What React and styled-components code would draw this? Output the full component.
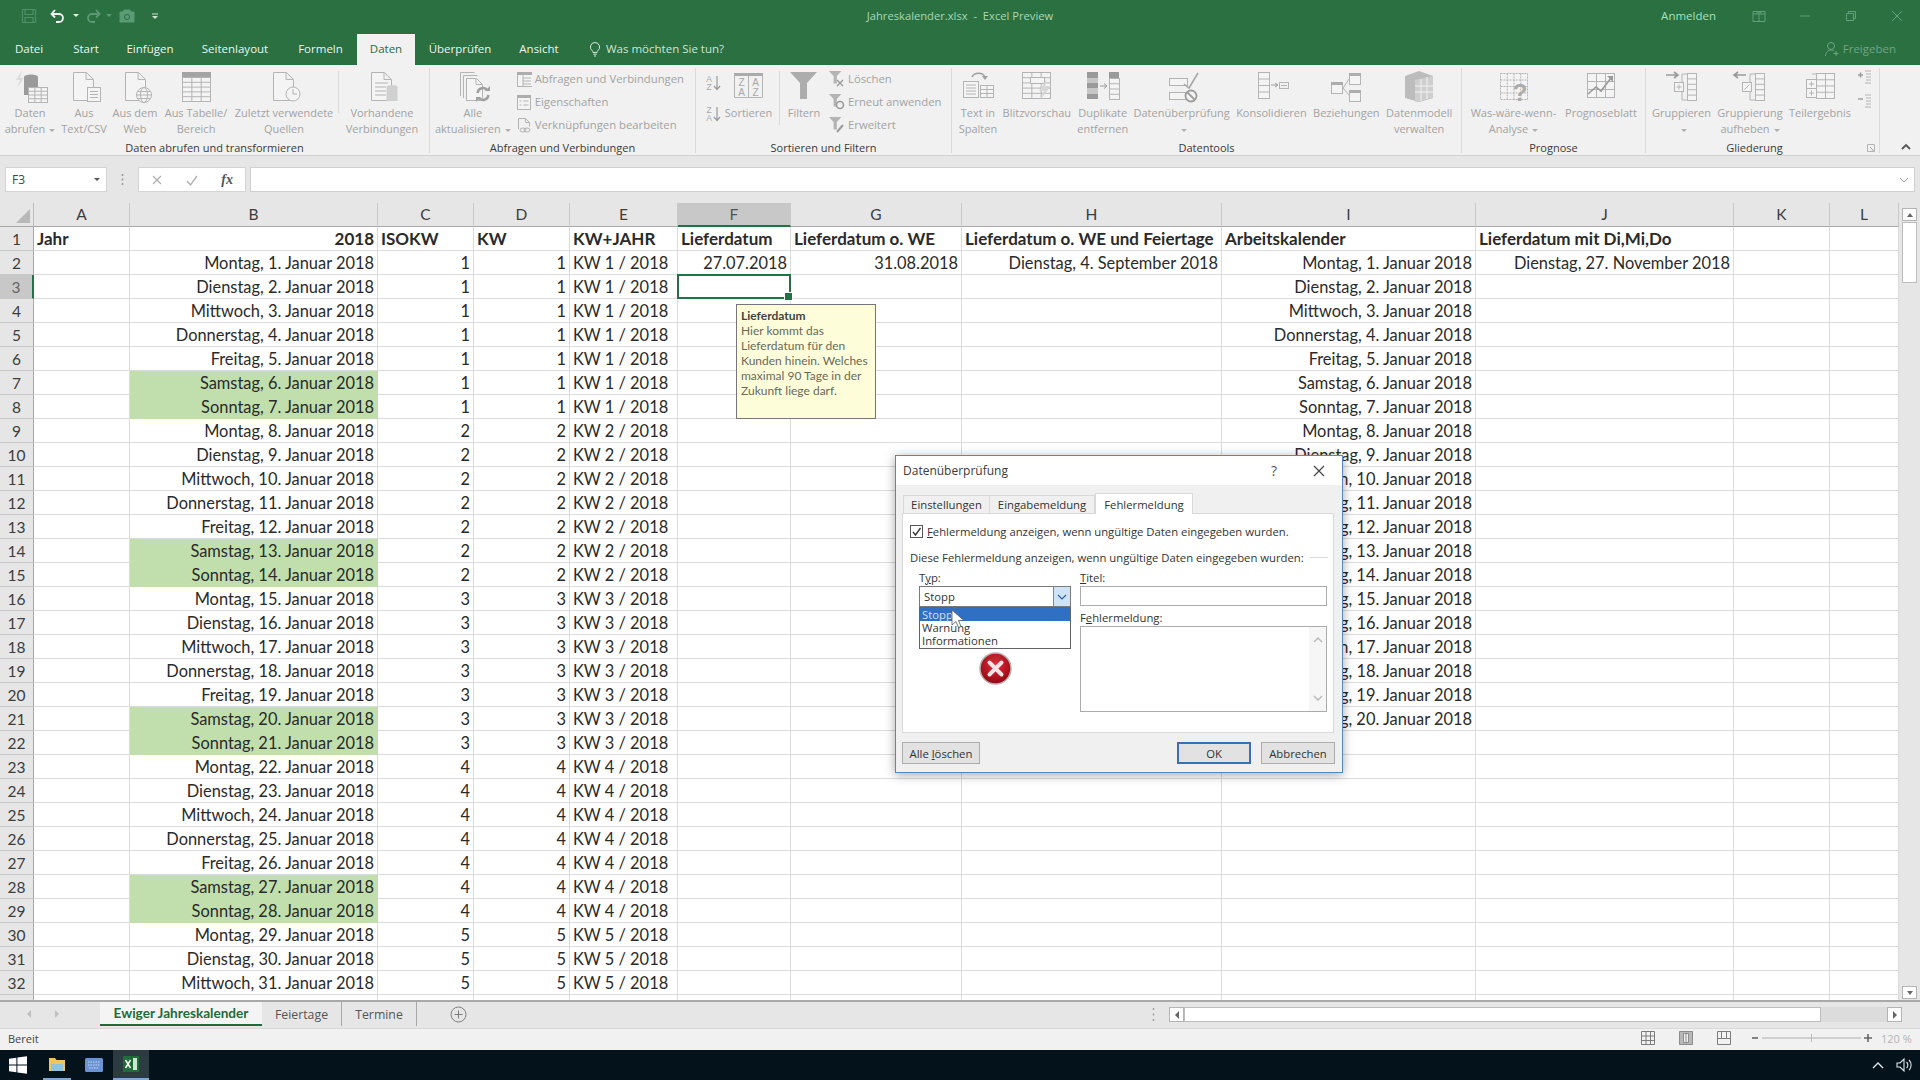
import React from 'react';
import styled, {createGlobalStyle} from 'styled-components';

const Global = createGlobalStyle`
    html, body {
        margin: 0;
        padding: 0;
        background: #e6e6e6;
        overflow: hidden;
    }
    * {
        box-sizing: border-box;
    }
`;

const GREEN = '#2a7041';
const UI = '"Open Sans", "Liberation Sans", sans-serif';
const SHEET = 'Lato, "Liberation Sans", sans-serif';

const Page = styled.div`
    position: relative;
    width: 1920px;
    height: 1080px;
    display: flex;
    flex-direction: column;
    font-family: ${UI};
    overflow: hidden;
`;

/* title bar */
const TitleBar = styled.div`
    height: 31px;
    background: ${GREEN};
    display: grid;
    grid-template-columns: 1fr auto 1fr;
    align-items: center;
`;
const Qat = styled.div`
    display: flex;
    align-items: center;
    padding-left: 18px;
`;
const QatItem = styled.div`
    display: flex;
    justify-content: center;
    width: ${p => p.$w}px;
    margin-left: ${p => p.$ml || 0}px;
`;
const DocTitle = styled.div`
    color: #a8d8b8;
    font-size: 11.2px;
    white-space: pre;
`;
const WindowControls = styled.div`
    display: flex;
    justify-content: flex-end;
    align-items: center;
`;
const Signin = styled.div`
    color: #a5e0bb;
    font-size: 11.5px;
    margin-right: 20px;
`;
const WinButton = styled.div`
    width: 46px;
    height: 31px;
    display: flex;
    align-items: center;
    justify-content: center;
`;

/* tabs */
const TabRow = styled.div`
    height: 34px;
    background: ${GREEN};
    display: flex;
    align-items: flex-end;
`;
const Tab = styled.div`
    width: ${p => p.$w}px;
    height: 31px;
    padding-bottom: 2px;
    display: flex;
    align-items: center;
    justify-content: center;
    font-size: 11.5px;
    color: ${p => p.$active ? '#2a6b40' : '#ecf5ef'};
    background: ${p => p.$active ? '#f1f1f1' : 'transparent'};
`;
const TellMe = styled.div`
    display: flex;
    align-items: center;
    gap: 3px;
    height: 31px;
    padding-bottom: 2px;
    margin-left: 14px;
    font-size: 11.5px;
    color: #cfe5d6;
`;
const Share = styled.div`
    margin-left: auto;
    height: 31px;
    padding-right: 24px;
    padding-bottom: 2px;
    display: flex;
    align-items: center;
    gap: 3px;
    font-size: 11.5px;
    color: #6fa585;
`;

/* ribbon */
const Ribbon = styled.div`
    height: 91px;
    background: #f1f1f1;
    border-bottom: 1px solid #d2d2d2;
    display: flex;
    align-items: flex-start;
    padding-top: 3px;
`;
const Group = styled.div`
    width: ${p => p.$w}px;
    height: 85px;
    border-right: 1px solid #dadada;
    display: flex;
    flex-direction: column;
`;
const GroupBody = styled.div`
    height: 72px;
    display: flex;
    align-items: flex-start;
`;
const GroupFoot = styled.div`
    height: 13px;
    display: flex;
`;
const GroupLabel = styled.div`
    flex: 1;
    text-align: center;
    font-size: 11px;
    line-height: 16px;
    color: #3a3a3a;
`;
const Launcher = styled.div`
    width: 16px;
    padding: 3px 0 0 3px;
`;
const BigButton = styled.div`
    width: ${p => p.$w}px;
    padding-top: 1px;
    display: flex;
    flex-direction: column;
    align-items: center;
`;
const BtnLabel = styled.div`
    font-size: 11px;
    line-height: 16px;
    color: #a3a3a3;
    white-space: nowrap;
    text-align: center;
`;
const Caret = styled.span`
    display: inline-block;
    width: 0;
    height: 0;
    margin-left: 4px;
    vertical-align: middle;
    border-left: 3px solid transparent;
    border-right: 3px solid transparent;
    border-top: 3px solid ${p => p.$c || '#b0b0b0'};
`;
const ThinRule = styled.div`
    width: 1px;
    height: ${p => p.$h}px;
    margin-top: 3px;
    margin-left: ${p => p.$ml || 0}px;
    background: #dadada;
`;
const SmallList = styled.div`
    display: flex;
    flex-direction: column;
    width: ${p => p.$w}px;
    margin-top: -1px;
    padding-left: ${p => p.$pl}px;
`;
const SmallRow = styled.div`
    height: 23px;
    display: flex;
    align-items: center;
    gap: 3px;
    font-size: 11.3px;
    color: #a3a3a3;
    white-space: nowrap;
`;
const SortColumn = styled.div`
    width: 34px;
    padding-top: 6px;
    display: flex;
    flex-direction: column;
    align-items: center;
    gap: 13px;
`;
const OutlineColumn = styled.div`
    width: 16px;
    padding-top: 1px;
    display: flex;
    flex-direction: column;
    align-items: center;
    gap: 8px;
`;
const Collapse = styled.div`
    flex: 1;
    height: 85px;
    display: flex;
    align-items: flex-end;
    justify-content: center;
    padding-left: 12px;
`;

/* formula bar */
const FormulaBar = styled.div`
    height: 47px;
    background: #e6e6e6;
    display: flex;
    align-items: flex-start;
    padding: 11px 5px 0 5px;
`;
const NameBox = styled.div`
    width: 102px;
    height: 25px;
    background: #fff;
    border: 1px solid #d4d4d4;
    display: flex;
    align-items: center;
    justify-content: space-between;
    padding: 0 6px;
    font-size: 12px;
    color: #444;
`;
const Grip = styled.div`
    width: 31px;
    display: flex;
    justify-content: center;
    padding-top: 7px;
`;
const FormulaButtons = styled.div`
    width: 108px;
    height: 25px;
    background: #fff;
    border: 1px solid #d4d4d4;
    display: flex;
    align-items: center;
    justify-content: space-between;
    padding: 0 12px;
`;
const Fx = styled.span`
    font-family: "Liberation Serif", serif;
    font-style: italic;
    font-weight: bold;
    font-size: 14px;
    color: #555;
`;
const FormulaInput = styled.div`
    flex: 1;
    height: 25px;
    margin-left: 4px;
    background: #fff;
    border: 1px solid #d0d0d0;
    display: flex;
    align-items: center;
    justify-content: flex-end;
    padding-right: 5px;
`;

/* sheet */
const SheetArea = styled.div`
    height: 797px;
    display: flex;
    background: #e6e6e6;
`;
const SheetGrid = styled.div`
    width: 1899px;
    height: 797px;
    overflow: hidden;
    display: grid;
    grid-template-columns: 34px 96px 248px 96px 96px 108px 113px 171px 260px 254px 258px 96px 69px;
    grid-auto-rows: 24px;
    font-family: ${SHEET};
`;
const Corner = styled.div`
    background: #e6e6e6;
    border-right: 1px solid #bdbdbd;
    border-bottom: 1px solid #a8a8a8;
    display: flex;
    align-items: flex-end;
    justify-content: flex-end;
    padding: 0 3px 3px 0;
`;
const Triangle = styled.div`
    width: 0;
    height: 0;
    border-left: 14px solid transparent;
    border-bottom: 14px solid #b8b8b8;
`;
const ColHead = styled.div`
    background: ${p => p.$active ? '#c8c8c8' : '#e6e6e6'};
    border-right: 1px solid #c8c8c8;
    border-bottom: ${p => p.$active ? '2px solid #217346' : '1px solid #a8a8a8'};
    text-align: center;
    font-size: 15.5px;
    line-height: 23px;
    color: ${p => p.$active ? '#555' : '#3d3d3d'};
`;
const RowHead = styled.div`
    background: ${p => p.$active ? '#c8c8c8' : '#e6e6e6'};
    border-right: ${p => p.$active ? '2px solid #217346' : '1px solid #a8a8a8'};
    border-bottom: 1px solid #c8c8c8;
    text-align: center;
    font-size: 15.5px;
    line-height: 24px;
    color: ${p => p.$active ? '#666' : '#3d3d3d'};
`;
const Cell = styled.div`
    position: relative;
    background: ${p => p.$green ? '#c1dfad' : '#fff'};
    border-right: 1px solid ${p => p.$green ? '#c1dfad' : '#dcdcdc'};
    border-bottom: 1px solid ${p => p.$green ? '#c1dfad' : '#dcdcdc'};
    padding: 0 3px;
    font-size: ${p => p.$bold ? 17 : 16.4}px;
    line-height: 24px;
    font-weight: ${p => p.$bold ? 700 : 400};
    text-align: ${p => p.$right ? 'right' : 'left'};
    color: #2a2a2a;
    white-space: nowrap;
`;
const Selection = styled.div`
    position: absolute;
    inset: -1px -1px -1px -1px;
    z-index: 2;
    border: 2px solid #217346;
    &::after {
        content: '';
        position: absolute;
        right: -4px;
        bottom: -4px;
        width: 7px;
        height: 7px;
        background: #217346;
        border: 1px solid #fff;
    }
`;
const VScroll = styled.div`
    width: 21px;
    height: 797px;
    padding: 5px 3px 1px 3px;
    display: flex;
    flex-direction: column;
    background: #e6e6e6;
`;
const ScrollBtn = styled.div`
    height: ${p => p.$h || 13}px;
    background: #fff;
    border: 1px solid #b4b4b4;
    display: flex;
    align-items: center;
    justify-content: center;
`;
const VThumb = styled.div`
    height: 61px;
    margin-top: 1px;
    background: #fff;
    border: 1px solid #bdbdbd;
`;
const Spacer = styled.div`
    flex: 1;
`;

/* sheet tabs */
const SheetBar = styled.div`
    height: 28px;
    background: #e6e6e6;
    border-top: 2px solid #a9a9a9;
    display: flex;
    align-items: flex-start;
`;
const NavArrows = styled.div`
    width: 100px;
    height: 24px;
    display: flex;
    align-items: center;
    gap: 22px;
    padding-left: 26px;
`;
const SheetTab = styled.div`
    width: ${p => p.$w}px;
    height: 24px;
    display: flex;
    align-items: center;
    justify-content: center;
    font-size: ${p => p.$active ? 13.6 : 12.3}px;
    font-weight: ${p => p.$active ? 700 : 400};
    color: ${p => p.$active ? '#1f6b3a' : '#555'};
    background: ${p => p.$active ? '#f4f4f4' : 'transparent'};
    border-bottom: ${p => p.$active ? '2px solid #1f6b3a' : 'none'};
    border-right: ${p => p.$sep ? '1px solid #a8a8a8' : 'none'};
    font-family: ${p => p.$active ? SHEET : UI};
`;
const AddSheet = styled.div`
    margin-left: 33px;
    height: 24px;
    display: flex;
    align-items: center;
`;
const HScrollWrap = styled.div`
    margin-left: auto;
    padding: 5px 18px 0 0;
    display: flex;
    align-items: center;
`;
const HGrip = styled.div`
    margin-right: 14px;
    display: flex;
`;
const HBtn = styled.div`
    width: 15px;
    height: 15px;
    background: #fff;
    border: 1px solid #b4b4b4;
    display: flex;
    align-items: center;
    justify-content: center;
`;
const HThumb = styled.div`
    width: 637px;
    height: 15px;
    background: #fff;
    border: 1px solid #bdbdbd;
`;
const HTrack = styled.div`
    width: 66px;
    height: 15px;
    background: #dcdcdc;
`;

/* status bar */
const StatusBar = styled.div`
    height: 22px;
    background: #f1f1f1;
    border-top: 1px solid #dadada;
    display: flex;
    align-items: center;
    padding: 0 0 3px 8px;
    font-size: 11px;
    color: #444;
`;
const StatusRight = styled.div`
    margin-left: auto;
    display: flex;
    align-items: center;
`;
const ViewBtn = styled.div`
    width: 38px;
    display: flex;
    justify-content: center;
`;
const ZoomMinus = styled.div`
    margin-left: 8px;
    display: flex;
`;
const ZoomSlider = styled.div`
    position: relative;
    width: 99px;
    height: 2px;
    margin: 0 3px;
    background: #cfcfcf;
    &::after {
        content: '';
        position: absolute;
        left: 49px;
        top: -3px;
        width: 1px;
        height: 8px;
        background: #bdbdbd;
    }
`;
const ZoomText = styled.div`
    width: 48px;
    padding-left: 9px;
    color: #b4b4b4;
    font-size: 11px;
    white-space: nowrap;
`;

/* taskbar */
const Taskbar = styled.div`
    height: 30px;
    background: #04121b;
    display: flex;
    align-items: stretch;
`;
const TaskSlot = styled.div`
    width: ${p => p.$w}px;
    margin-left: ${p => p.$ml || 0}px;
    display: flex;
    align-items: center;
    justify-content: center;
    background: ${p => p.$bg || 'transparent'};
    border-bottom: ${p => p.$open ? '2px solid #7fa9cf' : 'none'};
`;
const Tray = styled.div`
    margin-left: auto;
    display: flex;
    align-items: center;
    gap: 10px;
    padding-right: 7px;
`;

/* data validation dialog */
const Dialog = styled.div`
    position: absolute;
    left: 895px;
    top: 455px;
    width: 448px;
    height: 318px;
    background: #f0f0f0;
    border: 1px solid #4f8ac6;
    box-shadow: 0 2px 10px rgba(0, 0, 0, 0.35);
    font-size: 11.3px;
    color: #333;
`;
const DlgHead = styled.div`
    height: 29px;
    background: #fff;
    display: flex;
    align-items: center;
    padding-left: 7px;
    font-size: 12px;
    color: #3a3a3a;
`;
const DlgHelp = styled.div`
    margin-left: auto;
    margin-right: 36px;
    font-size: 14px;
    color: #555;
`;
const DlgClose = styled.div`
    margin-right: 17px;
    display: flex;
`;
const DlgTabs = styled.div`
    height: 28px;
    padding-left: 7px;
    display: flex;
    align-items: flex-end;
`;
const DlgTab = styled.div`
    width: ${p => p.$w}px;
    height: ${p => p.$active ? 21 : 18}px;
    display: flex;
    align-items: center;
    justify-content: center;
    background: ${p => p.$active ? '#fff' : '#f0f0f0'};
    border: 1px solid #d9d9d9;
    border-bottom: none;
    border-left: ${p => p.$first || p.$active ? '1px solid #d9d9d9' : 'none'};
    margin-bottom: ${p => p.$active ? -1 : 0}px;
    position: relative;
    z-index: ${p => p.$active ? 1 : 0};
`;
const DlgPanel = styled.div`
    height: 220px;
    margin: 0 8px 0 6px;
    background: #fff;
    border: 1px solid #d9d9d9;
    padding: 10px 5px 0 7px;
`;
const CheckRow = styled.div`
    display: flex;
    align-items: center;
    gap: 4px;
    height: 14px;
`;
const CheckBox = styled.div`
    width: 13px;
    height: 13px;
    border: 1px solid #555;
    display: flex;
    align-items: center;
    justify-content: center;
`;
const Legend = styled.div`
    margin-top: 12px;
    display: flex;
    align-items: center;
    gap: 6px;
    white-space: nowrap;
    &::after {
        content: '';
        flex: 1;
        height: 1px;
        background: #dcdcdc;
    }
`;
const Columns = styled.div`
    margin-top: 6px;
    padding-left: 9px;
    display: flex;
    gap: 9px;
`;
const Col = styled.div`
    width: ${p => p.$w}px;
    display: flex;
    flex-direction: column;
`;
const FieldLabel = styled.div`
    height: 15px;
    line-height: 14px;
    margin-top: ${p => p.$mt || 0}px;
`;
const SelectWrap = styled.div`
    position: relative;
`;
const SelectBox = styled.div`
    height: 21px;
    border: 1px solid #7a7a7a;
    background: #fff;
    display: flex;
    align-items: center;
    padding-left: 4px;
    justify-content: space-between;
`;
const SelectArrow = styled.div`
    width: 17px;
    height: 19px;
    background: #cfe3f7;
    border-left: 1px solid #5a90c8;
    display: flex;
    align-items: center;
    justify-content: center;
`;
const OptionList = styled.div`
    position: absolute;
    left: 0;
    right: 0;
    top: 21px;
    height: 42px;
    background: #fff;
    border: 1px solid #646464;
    z-index: 2;
`;
const Option = styled.div`
    height: 13px;
    line-height: 13px;
    padding-left: 2px;
    background: ${p => p.$active ? '#2f6fc4' : 'transparent'};
    color: ${p => p.$active ? '#cfe0f5' : '#333'};
`;
const CursorMark = styled.svg`
    position: absolute;
    left: 32px;
    top: 23px;
    z-index: 3;
`;
const StopBadge = styled.div`
    margin-top: 45px;
    display: flex;
    justify-content: center;
`;
const TextField = styled.div`
    height: 20px;
    background: #fff;
    border: 1px solid #ababab;
`;
const TextArea = styled.div`
    height: 86px;
    background: #fff;
    border: 1px solid #ababab;
    display: flex;
    justify-content: flex-end;
`;
const AreaScroll = styled.div`
    width: 17px;
    background: #f6f6f6;
    display: flex;
    flex-direction: column;
    justify-content: space-between;
    align-items: center;
    padding: 8px 0;
`;
const DlgFoot = styled.div`
    height: 41px;
    padding: 9px 7px 0 6px;
    display: flex;
    align-items: flex-start;
`;
const DlgButton = styled.div`
    width: ${p => p.$w}px;
    height: 22px;
    margin-left: ${p => p.$ml || 0}px;
    display: flex;
    align-items: center;
    justify-content: center;
    background: #e2e2e2;
    border: ${p => p.$primary ? '2px solid #3a6fb0' : '1px solid #adadad'};
`;

/* cell tooltip */
const Note = styled.div`
    position: absolute;
    left: 736px;
    top: 304px;
    width: 140px;
    height: 115px;
    background: #fdfdd9;
    border: 1px solid #767676;
    padding: 4px 4px;
    font-family: ${SHEET};
    font-size: 12px;
    line-height: 15px;
    color: #6a6a5a;
    z-index: 1;
`;
const NoteTitle = styled.div`
    font-weight: 700;
    color: #444;
    line-height: 14px;
`;

/* icons */
const Glyph = styled.svg`
    display: block;
    flex: none;
    fill: none;
    stroke: ${p => p.$c || '#b4b4b4'};
    stroke-width: 1;
`;
const Ico = ({s = 36, h, c, children}) => (
    <Glyph width={s} height={h || s} viewBox={`0 0 ${s} ${h || s}`} $c={c}>{children}</Glyph>
);
const D = '#b4b4b4';
const Doc = ({x = 7, w = 20}) => (
    <path d={`M${x + .5} 3.5h${w - 7}l7 7v21h-${w}zM${x + w - 7} 3.5v7h7`} fill="#f4f4f4" />
);
const tableLines = (x, y, w, h, cols, rows) => {
    const out = [];
    for (let i = 1; i < cols; i++) out.push(<path key={'c' + i} d={`M${x + i * w / cols} ${y}v${h}`} />);
    for (let i = 1; i < rows; i++) out.push(<path key={'r' + i} d={`M${x} ${y + i * h / rows}h${w}`} />);
    return out;
};
const Sheetlet = ({x, y, w, h, cols, rows, fill = '#f4f4f4'}) => (
    <g>
        <rect x={x + .5} y={y + .5} width={w} height={h} fill={fill} />
        {tableLines(x + .5, y + .5, w, h, cols, rows)}
    </g>
);
const Funnel = ({x = 0, y = 0, k = 1, fill = D}) => (
    <path d={`M${x} ${y}h${27 * k}l${-10 * k} ${11 * k}v${16 * k}h${-7 * k}v${-16 * k}z`} fill={fill} stroke="none" />
);

const icons = {
    getData: (
        <Ico>
            <path d="M10 1l-6 10h4l-3 8 7-10H8z" fill="#dcdcdc" stroke="none" />
            <ellipse cx="19" cy="8" rx="7" ry="2.5" fill="#9a9a9a" stroke="none" />
            <rect x="12" y="8" width="14" height="18" fill="#9a9a9a" stroke="none" />
            <Sheetlet x={16} y={18} w={19} h={15} cols={3} rows={4} fill="#f4f4f4" />
        </Ico>
    ),
    textCsv: (
        <Ico>
            <Doc />
            <rect x="21.5" y="18.5" width="13" height="14" fill="#f4f4f4" />
            <path d="M24 22.5h8M24 25.5h8M24 28.5h8" />
        </Ico>
    ),
    web: (
        <Ico>
            <Doc x={8} />
            <circle cx="27" cy="26" r="7.5" fill="#f4f4f4" />
            <ellipse cx="27" cy="26" rx="3.5" ry="7.5" />
            <path d="M19.5 26h15M20.5 22.5h13M20.5 29.5h13" />
        </Ico>
    ),
    table: (
        <Ico>
            <rect x="4" y="3" width="29" height="5" fill="#a4a4a4" stroke="none" />
            <Sheetlet x={4} y={8} w={28} h={24} cols={3} rows={5} />
        </Ico>
    ),
    recent: (
        <Ico>
            <Doc />
            <circle cx="27" cy="25" r="7" fill="#f4f4f4" />
            <path d="M27 20v5h4" />
        </Ico>
    ),
    existing: (
        <Ico>
            <Doc />
            <path d="M11 14h13M11 18h11M11 22h11M11 26h11" />
            <ellipse cx="28" cy="18" rx="5.5" ry="2" fill="#d0d0d0" stroke="none" />
            <rect x="22.5" y="18" width="11" height="14" fill="#d0d0d0" stroke="none" />
        </Ico>
    ),
    refreshAll: (
        <Ico>
            <path d="M5.5 27V3.5h14M8.5 29V6.5h14" />
            <path d="M11.5 31.5v-22h10l6 6v16z" fill="#f4f4f4" />
            <path d="M21 9.5v6h6" />
            <path d="M22.5 24a5.5 5.5 0 0 1 10-2.5M33.5 26a5.5 5.5 0 0 1-10 2.5" stroke="#a0a0a0" strokeWidth="2.4" />
            <path d="M30 22h5v-5zM26 28h-5v5z" fill="#a0a0a0" stroke="none" />
        </Ico>
    ),
    sortBig: (
        <Ico>
            <rect x="3" y="4" width="29" height="3" fill="#ababab" stroke="none" />
            <path d="M3.5 7v21.5h28V7M17.5 7v21.5" />
            <text x="10.5" y="17" fontSize="10" fontFamily="Liberation Sans" textAnchor="middle" fill="#a8a8a8" stroke="none">Z</text>
            <text x="24.5" y="17" fontSize="10" fontFamily="Liberation Sans" textAnchor="middle" fill="#a8a8a8" stroke="none">A</text>
            <text x="10.5" y="27" fontSize="10" fontFamily="Liberation Sans" textAnchor="middle" fill="#a8a8a8" stroke="none">A</text>
            <text x="24.5" y="27" fontSize="10" fontFamily="Liberation Sans" textAnchor="middle" fill="#a8a8a8" stroke="none">Z</text>
        </Ico>
    ),
    filter: (
        <Ico>
            <g transform="translate(4 3)"><Funnel fill="#adadad" /></g>
        </Ico>
    ),
    textCols: (
        <Ico>
            <path d="M12 8a7 6 0 0 1 13 0" stroke="#a0a0a0" strokeWidth="1.6" />
            <path d="M22 7l3 4 3-4z" fill="#a0a0a0" stroke="none" />
            <rect x="3.5" y="12.5" width="15" height="16" fill="#f4f4f4" />
            <path d="M6 16h10M6 19h10M6 22h10M6 25h10" />
            <Sheetlet x={20} y={16} w={13} h={12} cols={2} rows={3} />
        </Ico>
    ),
    flash: (
        <Ico>
            <Sheetlet x={3} y={3} w={28} h={26} cols={3} rows={5} />
            <rect x="11.5" y="8.5" width="14" height="6" fill="#f4f4f4" />
            <path d="M28 10l-8 12h5l-4 9 11-14h-6z" fill="#d6d6d6" stroke="none" />
        </Ico>
    ),
    dupes: (
        <Ico>
            <rect x="2" y="3" width="11" height="27" fill="#c6c6c6" stroke="none" />
            <rect x="2" y="3" width="11" height="6" fill="#9a9a9a" stroke="none" />
            <rect x="2" y="14" width="11" height="5" fill="#9a9a9a" stroke="none" />
            <rect x="2" y="25" width="11" height="5" fill="#9a9a9a" stroke="none" />
            <path d="M15 17h6M19 14.5l3 2.5-3 2.5" stroke="#9a9a9a" />
            <rect x="24" y="3" width="10" height="6" fill="#9a9a9a" stroke="none" />
            <Sheetlet x={24} y={9} w={10} h={21} cols={1} rows={4} />
        </Ico>
    ),
    validate: (
        <Ico>
            <rect x="5.5" y="9.5" width="18" height="7" fill="#f4f4f4" />
            <rect x="5.5" y="23.5" width="18" height="7" fill="#f4f4f4" />
            <path d="M20 15l5 4 9-15" stroke="#a8a8a8" strokeWidth="1.6" />
            <circle cx="27" cy="27" r="5.5" fill="#f4f4f4" stroke="#9c9c9c" strokeWidth="1.8" />
            <path d="M23 23l8 8" stroke="#9c9c9c" strokeWidth="1.8" />
        </Ico>
    ),
    consolidate: (
        <Ico>
            <Sheetlet x={5} y={3} w={11} h={26} cols={1} rows={4} />
            <path d="M18 16h6M22 14l3 2-3 2" stroke="#9a9a9a" />
            <rect x="26.5" y="13.5" width="9" height="6" />
            <path d="M28 16.5h6" />
        </Ico>
    ),
    relations: (
        <Ico>
            <rect x="3.5" y="13.5" width="11" height="11" fill="#f4f4f4" />
            <rect x="3" y="13" width="12" height="3" fill="#adadad" stroke="none" />
            <rect x="21.5" y="4.5" width="11" height="11" fill="#f4f4f4" />
            <rect x="21" y="4" width="12" height="3" fill="#adadad" stroke="none" />
            <rect x="21.5" y="21.5" width="11" height="11" fill="#f4f4f4" />
            <rect x="21" y="21" width="12" height="3" fill="#adadad" stroke="none" />
            <path d="M15 19l6-9M15 19l6 7" />
        </Ico>
    ),
    model: (
        <Ico>
            <path d="M4 7l14-5 14 5v22l-14 4-14-4z" fill="#bcbcbc" stroke="none" />
            <path d="M14 11l18-4v22l-18 4z" fill="#cfcfcf" stroke="none" />
            <path d="M14 17h18M14 23h18M20 10v22M26 8v22" stroke="#f1f1f1" />
        </Ico>
    ),
    whatIf: (
        <Ico>
            <g strokeDasharray="2 1"><Sheetlet x={4} y={4} w={27} h={26} cols={4} rows={4} /></g>
            <text x="24" y="32" fontSize="24" fontWeight="700" fontFamily="Liberation Sans" textAnchor="middle" fill="#ababab" stroke="none">?</text>
        </Ico>
    ),
    forecast: (
        <Ico>
            <Sheetlet x={4} y={4} w={27} h={24} cols={3} rows={3} />
            <path d="M5 25l8-7 5 4 10-13" stroke="#9a9a9a" strokeWidth="1.6" />
            <path d="M24 7h6v6z" fill="#9a9a9a" stroke="none" />
        </Ico>
    ),
    group: (
        <Ico>
            <path d="M2 6h11M10 3l4 3-4 3" stroke="#9a9a9a" strokeWidth="1.6" />
            <path d="M23 5h-5v26h5" />
            <Sheetlet x={23} y={4} w={9} h={27} cols={1} rows={5} />
            <rect x="10.5" y="13.5" width="9" height="9" fill="#f4f4f4" />
            <path d="M12.5 18h5M15 15.5v5" />
        </Ico>
    ),
    ungroup: (
        <Ico>
            <path d="M14 6H3M6 3L2 6l4 3" stroke="#9a9a9a" strokeWidth="1.6" />
            <path d="M23 5h-5v26h5" />
            <Sheetlet x={23} y={4} w={9} h={27} cols={1} rows={5} />
            <rect x="10.5" y="13.5" width="9" height="9" fill="#f4f4f4" />
            <path d="M12.5 20.5l5-5" />
        </Ico>
    ),
    subtotal: (
        <Ico>
            <path d="M15 5h-5" />
            <Sheetlet x={14} y={4} w={18} h={25} cols={2} rows={4} />
            <rect x="4.5" y="10.5" width="10" height="9" fill="#f4f4f4" />
            <rect x="4.5" y="19.5" width="10" height="9" fill="#f4f4f4" />
            <path d="M7 15h5M9.5 12.5v5M7 24h5M9.5 21.5v5" />
        </Ico>
    ),
    panel: (
        <Ico s={16}>
            <rect x="1.5" y="1.5" width="15" height="14" fill="#f4f4f4" />
            <rect x="1" y="1" width="15" height="3" fill="#adadad" stroke="none" />
            <path d="M7 4v11M7 7h8M7 10h8M7 13h8" />
        </Ico>
    ),
    props: (
        <Ico s={16}>
            <rect x="1.5" y="1.5" width="13" height="14" fill="#f4f4f4" />
            <rect x="1" y="1" width="14" height="3" fill="#adadad" stroke="none" />
            <path d="M3.5 7h2M7.5 7h5M3.5 11h2M7.5 11h5" />
        </Ico>
    ),
    links: (
        <Ico s={16}>
            <path d="M2.5 12V1.5h7l4 4v4M9.5 1.5v4h4" />
            <ellipse cx="7" cy="13" rx="3" ry="2" />
            <ellipse cx="11" cy="13" rx="3" ry="2" />
        </Ico>
    ),
    clear: (
        <Ico s={16}>
            <Funnel k={.46} />
            <path d="M8 9l6 6M14 9l-6 6" stroke="#9a9a9a" strokeWidth="1.4" />
        </Ico>
    ),
    reapply: (
        <Ico s={16}>
            <Funnel k={.46} />
            <circle cx="11" cy="11" r="3.5" stroke="#9a9a9a" strokeWidth="1.6" />
        </Ico>
    ),
    advanced: (
        <Ico s={16}>
            <Funnel k={.46} />
            <path d="M8 15l6-7" stroke="#9a9a9a" strokeWidth="2" />
        </Ico>
    ),
    sortAz: (
        <Ico s={18}>
            <text x="5" y="8" fontSize="8.5" fontFamily="Liberation Sans" textAnchor="middle" fill="#a8a8a8" stroke="none">A</text>
            <text x="5" y="16" fontSize="8.5" fontFamily="Liberation Sans" textAnchor="middle" fill="#a8a8a8" stroke="none">Z</text>
            <path d="M13 2v13M10 12l3 3.5 3-3.5" stroke="#9a9a9a" strokeWidth="1.2" />
        </Ico>
    ),
    sortZa: (
        <Ico s={18}>
            <text x="5" y="8" fontSize="8.5" fontFamily="Liberation Sans" textAnchor="middle" fill="#a8a8a8" stroke="none">Z</text>
            <text x="5" y="16" fontSize="8.5" fontFamily="Liberation Sans" textAnchor="middle" fill="#a8a8a8" stroke="none">A</text>
            <path d="M13 2v13M10 12l3 3.5 3-3.5" stroke="#9a9a9a" strokeWidth="1.2" />
        </Ico>
    ),
    indentPlus: (
        <Ico s={16}>
            <path d="M1 6h5M3.5 3.5v5" stroke="#9a9a9a" strokeWidth="1.4" />
            <path d="M8 2h6M9 5h5M9 8h5M9 11h5M8 14h6" />
        </Ico>
    ),
    indentMinus: (
        <Ico s={16}>
            <path d="M1 6h5" stroke="#9a9a9a" strokeWidth="1.4" />
            <path d="M8 2h6M9 5h5M9 8h5M9 11h5M8 14h6" />
        </Ico>
    ),
};

const Big = ({w, icon, lines, caret}) => (
    <BigButton $w={w}>
        {icons[icon]}
        <BtnLabel>{lines[0]}{lines.length === 1 && caret ? <Caret /> : null}</BtnLabel>
        {lines[1] && <BtnLabel>{lines[1]}{caret ? <Caret /> : null}</BtnLabel>}
    </BigButton>
);
const Small = ({icon, text}) => <SmallRow>{icons[icon]}{text}</SmallRow>;

const RibbonBar = () => (
    <Ribbon>
        <Group $w={430}>
            <GroupBody>
                <Big w={60} icon="getData" lines={['Daten', 'abrufen']} caret />
                <Big w={48} icon="textCsv" lines={['Aus', 'Text/CSV']} />
                <Big w={54} icon="web" lines={['Aus dem', 'Web']} />
                <Big w={68} icon="table" lines={['Aus Tabelle/', 'Bereich']} />
                <Big w={108} icon="recent" lines={['Zuletzt verwendete', 'Quellen']} />
                <ThinRule $h={42} />
                <Big w={86} icon="existing" lines={['Vorhandene', 'Verbindungen']} />
            </GroupBody>
            <GroupFoot><GroupLabel>Daten abrufen und transformieren</GroupLabel></GroupFoot>
        </Group>
        <Group $w={266}>
            <GroupBody>
                <Big w={86} icon="refreshAll" lines={['Alle', 'aktualisieren']} caret />
                <SmallList $w={180} $pl={0}>
                    <Small icon="panel" text="Abfragen und Verbindungen" />
                    <Small icon="props" text="Eigenschaften" />
                    <Small icon="links" text="Verknüpfungen bearbeiten" />
                </SmallList>
            </GroupBody>
            <GroupFoot><GroupLabel>Abfragen und Verbindungen</GroupLabel></GroupFoot>
        </Group>
        <Group $w={256}>
            <GroupBody>
                <SortColumn>
                    {icons.sortAz}
                    {icons.sortZa}
                </SortColumn>
                <Big w={37} icon="sortBig" lines={['Sortieren']} />
                <ThinRule $h={54} $ml={12} />
                <Big w={48} icon="filter" lines={['Filtern']} />
                <SmallList $w={123} $pl={1}>
                    <Small icon="clear" text="Löschen" />
                    <Small icon="reapply" text="Erneut anwenden" />
                    <Small icon="advanced" text="Erweitert" />
                </SmallList>
            </GroupBody>
            <GroupFoot><GroupLabel>Sortieren und Filtern</GroupLabel></GroupFoot>
        </Group>
        <Group $w={510}>
            <GroupBody>
                <Big w={52} icon="textCols" lines={['Text in', 'Spalten']} />
                <Big w={66} icon="flash" lines={['Blitzvorschau']} />
                <Big w={66} icon="dupes" lines={['Duplikate', 'entfernen']} />
                <BigButton $w={92}>
                    {icons.validate}
                    <BtnLabel>Datenüberprüfung</BtnLabel>
                    <BtnLabel><Caret /></BtnLabel>
                </BigButton>
                <Big w={88} icon="consolidate" lines={['Konsolidieren']} />
                <Big w={62} icon="relations" lines={['Beziehungen']} />
                <Big w={84} icon="model" lines={['Datenmodell', 'verwalten']} />
            </GroupBody>
            <GroupFoot><GroupLabel>Datentools</GroupLabel></GroupFoot>
        </Group>
        <Group $w={184}>
            <GroupBody>
                <Big w={103} icon="whatIf" lines={['Was-wäre-wenn-', 'Analyse']} caret />
                <Big w={72} icon="forecast" lines={['Prognoseblatt']} />
            </GroupBody>
            <GroupFoot><GroupLabel>Prognose</GroupLabel></GroupFoot>
        </Group>
        <Group $w={234}>
            <GroupBody>
                <BigButton $w={71}>
                    {icons.group}
                    <BtnLabel>Gruppieren</BtnLabel>
                    <BtnLabel><Caret /></BtnLabel>
                </BigButton>
                <Big w={66} icon="ungroup" lines={['Gruppierung', 'aufheben']} caret />
                <Big w={74} icon="subtotal" lines={['Teilergebnis']} />
                <OutlineColumn>
                    {icons.indentPlus}
                    {icons.indentMinus}
                </OutlineColumn>
            </GroupBody>
            <GroupFoot>
                <GroupLabel>Gliederung</GroupLabel>
                <Launcher>
                    <Ico s={10}><path d="M1.5 8.5v-7h7v7zM4 4l4 4M5.5 8h3V5" /></Ico>
                </Launcher>
            </GroupFoot>
        </Group>
        <Collapse>
            <Ico s={12} c="#555"><path d="M2 8l4-4 4 4" strokeWidth="1.8" /></Ico>
        </Collapse>
    </Ribbon>
);

const COLS = ['A', 'B', 'C', 'D', 'E', 'F', 'G', 'H', 'I', 'J', 'K', 'L'];
const DAYS = ['Montag', 'Dienstag', 'Mittwoch', 'Donnerstag', 'Freitag', 'Samstag', 'Sonntag'];
const dateText = (d) => `${DAYS[(d - 1) % 7]}, ${d}. Januar 2018`;

const headRow = [
    ['Jahr'], ['2018', true], ['ISOKW'], ['KW'], ['KW+JAHR'], ['Lieferdatum'],
    ['Lieferdatum o. WE'], ['Lieferdatum o. WE und Feiertage'], ['Arbeitskalender'], ['Lieferdatum mit Di,Mi,Do'],
    [''], ['']
];

const buildRow = (r) => {
    const d = r - 1;
    if (d > 31) return COLS.map(() => ({}));
    const week = Math.ceil(d / 7);
    const weekend = (d - 1) % 7 >= 5;
    const row = COLS.map(() => ({}));
    row[1] = {text: dateText(d), right: true, green: weekend};
    row[2] = {text: week, right: true};
    row[3] = {text: week, right: true};
    row[4] = {text: `KW ${week} / 2018`};
    if (d <= 20) row[8] = {text: dateText(d), right: true};
    if (r === 2) {
        row[5] = {text: '27.07.2018', right: true};
        row[6] = {text: '31.08.2018', right: true};
        row[7] = {text: 'Dienstag, 4. September 2018', right: true};
        row[9] = {text: 'Dienstag, 27. November 2018', right: true};
    }
    return row;
};

const Sheet = () => {
    const rows = [];
    for (let r = 2; r <= 33; r++) rows.push(r);
    return (
        <SheetGrid>
            <Corner><Triangle /></Corner>
            {COLS.map(c => <ColHead key={c} $active={c === 'F'}>{c}</ColHead>)}
            <RowHead>1</RowHead>
            {headRow.map(([t, right], i) => <Cell key={i} $bold $right={right}>{t}</Cell>)}
            {rows.map(r => (
                <React.Fragment key={r}>
                    <RowHead $active={r === 3}>{r < 33 ? r : ''}</RowHead>
                    {buildRow(r).map((c, i) => (
                        <Cell key={i} $right={c.right} $green={c.green}>
                            {c.text}
                            {r === 3 && i === 5 && <Selection />}
                        </Cell>
                    ))}
                </React.Fragment>
            ))}
        </SheetGrid>
    );
};

const ErrorIcon = () => (
    <svg width="33" height="33" viewBox="0 0 33 33">
        <defs>
            <radialGradient id="stopRed" cx="50%" cy="35%" r="70%">
                <stop offset="0%" stopColor="#d8303a" />
                <stop offset="70%" stopColor="#a80f1c" />
                <stop offset="100%" stopColor="#7d0a14" />
            </radialGradient>
        </defs>
        <circle cx="16.5" cy="16.5" r="15.5" fill="url(#stopRed)" stroke="#b9b0b0" strokeWidth="1.5" />
        <path d="M10.5 10.5l12 12M22.5 10.5l-12 12" stroke="#f1e6e6" strokeWidth="4" strokeLinecap="round" />
    </svg>
);

const ValidationDialog = () => (
    <Dialog>
        <DlgHead>
            Datenüberprüfung
            <DlgHelp>?</DlgHelp>
            <DlgClose>
                <Ico s={12} c="#444"><path d="M1 1l10 10M11 1L1 11" strokeWidth="1.2" /></Ico>
            </DlgClose>
        </DlgHead>
        <DlgTabs>
            <DlgTab $w={87} $first>Einstellungen</DlgTab>
            <DlgTab $w={105}>Eingabemeldung</DlgTab>
            <DlgTab $w={98} $active>Fehlermeldung</DlgTab>
        </DlgTabs>
        <DlgPanel>
            <CheckRow>
                <CheckBox>
                    <Ico s={11} c="#3a3a3a"><path d="M2 6l2.5 3L9.5 2" strokeWidth="1.4" /></Ico>
                </CheckBox>
                <span><u>F</u>ehlermeldung anzeigen, wenn ungültige Daten eingegeben wurden.</span>
            </CheckRow>
            <Legend>Diese Fehlermeldung anzeigen, wenn ungültige Daten eingegeben wurden:</Legend>
            <Columns>
                <Col $w={152}>
                    <FieldLabel>T<u>y</u>p:</FieldLabel>
                    <SelectWrap>
                        <SelectBox>
                            Stopp
                            <SelectArrow>
                                <Ico s={10} c="#2f5f99"><path d="M1 3l4 4 4-4" strokeWidth="1.2" /></Ico>
                            </SelectArrow>
                        </SelectBox>
                        <OptionList>
                            <Option $active>Stopp</Option>
                            <Option>Warnung</Option>
                            <Option>Informationen</Option>
                        </OptionList>
                        <CursorMark width="14" height="20" viewBox="0 0 14 20">
                            <path d="M1 1v15l4-3.5 2.5 6 2.5-1-2.5-6H13z" fill="#fff" stroke="#555" strokeWidth=".8" />
                        </CursorMark>
                    </SelectWrap>
                    <StopBadge><ErrorIcon /></StopBadge>
                </Col>
                <Col $w={247}>
                    <FieldLabel><u>T</u>itel:</FieldLabel>
                    <TextField />
                    <FieldLabel $mt={5}>F<u>e</u>hlermeldung:</FieldLabel>
                    <TextArea>
                        <AreaScroll>
                            <Ico s={10} c="#b8b8b8"><path d="M1 7l4-4 4 4" strokeWidth="1.4" /></Ico>
                            <Ico s={10} c="#b8b8b8"><path d="M1 3l4 4 4-4" strokeWidth="1.4" /></Ico>
                        </AreaScroll>
                    </TextArea>
                </Col>
            </Columns>
        </DlgPanel>
        <DlgFoot>
            <DlgButton $w={78}><span>Alle <u>l</u>öschen</span></DlgButton>
            <DlgButton $w={74} $ml={197} $primary>OK</DlgButton>
            <DlgButton $w={74} $ml={10}>Abbrechen</DlgButton>
        </DlgFoot>
    </Dialog>
);

export default function App() {
    return (
        <Page>
            <Global />
            <TitleBar>
                <Qat>
                    <QatItem $w={22}>
                        <Ico s={16} c="#4f8f68"><path d="M1.5 1.5h13v13h-13zM4 1.5v5h8v-5M4 14.5v-5h8v5" strokeWidth="1.2" /></Ico>
                    </QatItem>
                    <QatItem $w={26} $ml={5}>
                        <Ico s={16} c="#f1f7f3"><path d="M5 2L1.5 6 5 9.5M2 6h7a4 4 0 0 1 0 8H6" strokeWidth="1.8" /></Ico>
                    </QatItem>
                    <QatItem $w={6}><Caret $c="#e8f2eb" /></QatItem>
                    <QatItem $w={22} $ml={5}>
                        <Ico s={16} c="#5c9a75"><path d="M11 2l3.5 4L11 9.5M14 6H7a4 4 0 0 0 0 8h3" strokeWidth="1.8" /></Ico>
                    </QatItem>
                    <QatItem $w={6}><Caret $c="#5c9a75" /></QatItem>
                    <QatItem $w={20} $ml={7}>
                        <Ico s={16} c="#5c9a75"><path d="M1 4h3l1-2h6l1 2h3v10H1z" fill="#5c9a75" /><circle cx="8" cy="9" r="2.6" stroke="#2a7041" /></Ico>
                    </QatItem>
                    <QatItem $w={12} $ml={12}>
                        <Ico s={10} c="#cfe5d6"><path d="M2 3h6" /><path d="M2 5h6L5 8z" fill="#cfe5d6" stroke="none" /></Ico>
                    </QatItem>
                </Qat>
                <DocTitle>Jahreskalender.xlsx  -  Excel Preview</DocTitle>
                <WindowControls>
                    <Signin>Anmelden</Signin>
                    <WinButton>
                        <Ico s={14} c="#63a07c"><path d="M1 2.5h12v10H1zM1 5h12M7 5v7.5M4.5 3.8h5" /></Ico>
                    </WinButton>
                    <WinButton>
                        <Ico s={12} c="#63a07c"><path d="M1 6h10" /></Ico>
                    </WinButton>
                    <WinButton>
                        <Ico s={12} c="#63a07c"><path d="M1.5 3.5h7v7h-7zM3.5 3.5v-2h7v7h-2" /></Ico>
                    </WinButton>
                    <WinButton>
                        <Ico s={12} c="#63a07c"><path d="M1 1l10 10M11 1L1 11" /></Ico>
                    </WinButton>
                </WindowControls>
            </TitleBar>
            <TabRow>
                <Tab $w={58}>Datei</Tab>
                <Tab $w={56}>Start</Tab>
                <Tab $w={72}>Einfügen</Tab>
                <Tab $w={98}>Seitenlayout</Tab>
                <Tab $w={73}>Formeln</Tab>
                <Tab $w={58} $active>Daten</Tab>
                <Tab $w={90}>Überprüfen</Tab>
                <Tab $w={68}>Ansicht</Tab>
                <TellMe>
                    <Ico s={16} c="#d6e9dc"><path d="M8 1.5a4.6 4.6 0 0 0-2.6 8.4c.5.4.6 1 .6 1.6h4c0-.6.1-1.2.6-1.6A4.6 4.6 0 0 0 8 1.5zM6.3 13.2h3.4M7 15h2" /></Ico>
                    Was möchten Sie tun?
                </TellMe>
                <Share>
                    <Ico s={16} c="#6fa585"><circle cx="7" cy="5" r="3.5" /><path d="M1.5 15c0-3.5 2.5-6 5.5-6 1 0 2 .3 2.8.8M12 10v5M9.5 12.5h5" /></Ico>
                    Freigeben
                </Share>
            </TabRow>
            <RibbonBar />
            <FormulaBar>
                <NameBox>
                    F3
                    <Caret $c="#555" />
                </NameBox>
                <Grip>
                    <Ico s={3} h={11} c="#9c9c9c"><path d="M1.5 0v2M1.5 4.5v2M1.5 9v2" strokeWidth="1.6" /></Ico>
                </Grip>
                <FormulaButtons>
                    <Ico s={12} c="#b0b0b0"><path d="M2 2l8 8M10 2l-8 8" strokeWidth="1.3" /></Ico>
                    <Ico s={14} c="#b0b0b0"><path d="M2 8l3.5 4L12 3" strokeWidth="1.4" /></Ico>
                    <Fx>fx</Fx>
                </FormulaButtons>
                <FormulaInput>
                    <Ico s={10} c="#a0a0a0"><path d="M1 3l4 4 4-4" /></Ico>
                </FormulaInput>
            </FormulaBar>
            <SheetArea>
                <Sheet />
                <VScroll>
                    <ScrollBtn>
                        <Ico s={8} c="#666"><path d="M1 6l3-4 3 4z" fill="#666" stroke="none" /></Ico>
                    </ScrollBtn>
                    <VThumb />
                    <Spacer />
                    <ScrollBtn>
                        <Ico s={8} c="#666"><path d="M1 2l3 4 3-4z" fill="#666" stroke="none" /></Ico>
                    </ScrollBtn>
                </VScroll>
            </SheetArea>
            <SheetBar>
                <NavArrows>
                    <Ico s={6} h={10} c="#c0c0c0"><path d="M5 1L1 5l4 4z" fill="#c0c0c0" stroke="none" /></Ico>
                    <Ico s={6} h={10} c="#c0c0c0"><path d="M1 1l4 4-4 4z" fill="#c0c0c0" stroke="none" /></Ico>
                </NavArrows>
                <SheetTab $w={162} $active>Ewiger Jahreskalender</SheetTab>
                <SheetTab $w={80} $sep>Feiertage</SheetTab>
                <SheetTab $w={75} $sep>Termine</SheetTab>
                <AddSheet>
                    <Ico s={17} c="#7d7d7d"><circle cx="8.5" cy="8.5" r="7.5" /><path d="M8.5 4.5v8M4.5 8.5h8" /></Ico>
                </AddSheet>
                <HScrollWrap>
                    <HGrip>
                        <Ico s={3} h={13} c="#9c9c9c"><path d="M1.5 0v2M1.5 5.5v2M1.5 11v2" strokeWidth="1.4" /></Ico>
                    </HGrip>
                    <HBtn><Ico s={6} h={8} c="#666"><path d="M5 0L1 4l4 4z" fill="#666" stroke="none" /></Ico></HBtn>
                    <HThumb />
                    <HTrack />
                    <HBtn><Ico s={6} h={8} c="#666"><path d="M1 0l4 4-4 4z" fill="#666" stroke="none" /></Ico></HBtn>
                </HScrollWrap>
            </SheetBar>
            <StatusBar>
                Bereit
                <StatusRight>
                    <ViewBtn>
                        <Ico s={14} c="#7d7d7d"><path d="M.5.5h13v13H.5zM.5 5h13M.5 9.5h13M5 .5v13M9.5 .5v13" /></Ico>
                    </ViewBtn>
                    <ViewBtn>
                        <Ico s={14} c="#8d8d8d"><path d="M.5.5h13v13H.5z" fill="#b8b8b8" /><path d="M4.5 2.5h5v9h-5z" fill="#f1f1f1" /><path d="M7 2.5v9" /></Ico>
                    </ViewBtn>
                    <ViewBtn>
                        <Ico s={14} c="#7d7d7d"><path d="M.5.5h13v13H.5zM4.5.5v7h5v-7M.5 7.5h13" /></Ico>
                    </ViewBtn>
                    <ZoomMinus>
                        <Ico s={8} c="#666"><path d="M1 4h6" strokeWidth="1.6" /></Ico>
                    </ZoomMinus>
                    <ZoomSlider />
                    <Ico s={8} c="#666"><path d="M0 4h8M4 0v8" strokeWidth="1.6" /></Ico>
                    <ZoomText>120 %</ZoomText>
                </StatusRight>
            </StatusBar>
            <Taskbar>
                <TaskSlot $w={36}>
                    <svg width="18" height="18" viewBox="0 0 18 18"><path d="M0 2.8l7.4-1V8.5H0zM8.4 1.6L18 .3v8.2H8.4zM0 9.5h7.4v6.7L0 15.2zM8.4 9.5H18v8.2l-9.6-1.3z" fill="#fff" /></svg>
                </TaskSlot>
                <TaskSlot $w={28} $ml={7} $open>
                    <svg width="18" height="18" viewBox="0 0 18 18"><path d="M1 3h6l1.5 2H17v11H1z" fill="#e9c95e" /><path d="M3 9h12v7H3z" fill="#8ec3df" /></svg>
                </TaskSlot>
                <TaskSlot $w={34} $ml={6}>
                    <svg width="18" height="14" viewBox="0 0 18 14"><rect width="18" height="14" rx="1.5" fill="#6a93d6" /><path d="M3 4h12M3 7h12M4 10h10" stroke="#c7d8f2" strokeDasharray="1.5 1" /></svg>
                </TaskSlot>
                <TaskSlot $w={36} $ml={2} $bg="#2c3a42" $open>
                    <svg width="16" height="18" viewBox="0 0 16 18"><path d="M0 1h16v16H0z" fill="#1f6b3a" /><path d="M10 3h4v12h-4z" fill="#cfe5d6" /><path d="M2.5 5l5 8M7.5 5l-5 8" stroke="#fff" strokeWidth="1.5" /></svg>
                </TaskSlot>
                <Tray>
                    <Ico s={14} c="#dfe6ea"><path d="M2 10l5-5 5 5" strokeWidth="1.4" /></Ico>
                    <Ico s={18} c="#dfe6ea"><path d="M2 7h3l4-4v12l-4-4H2zM11.5 6a4 4 0 0 1 0 6M14 4a7 7 0 0 1 0 10" strokeWidth="1.1" /></Ico>
                </Tray>
            </Taskbar>
            <Note>
                <NoteTitle>Lieferdatum</NoteTitle>
                Hier kommt das<br />
                Lieferdatum für den<br />
                Kunden hinein. Welches<br />
                maximal 90 Tage in der<br />
                Zukunft liege darf.
            </Note>
            <ValidationDialog />
        </Page>
    );
}
